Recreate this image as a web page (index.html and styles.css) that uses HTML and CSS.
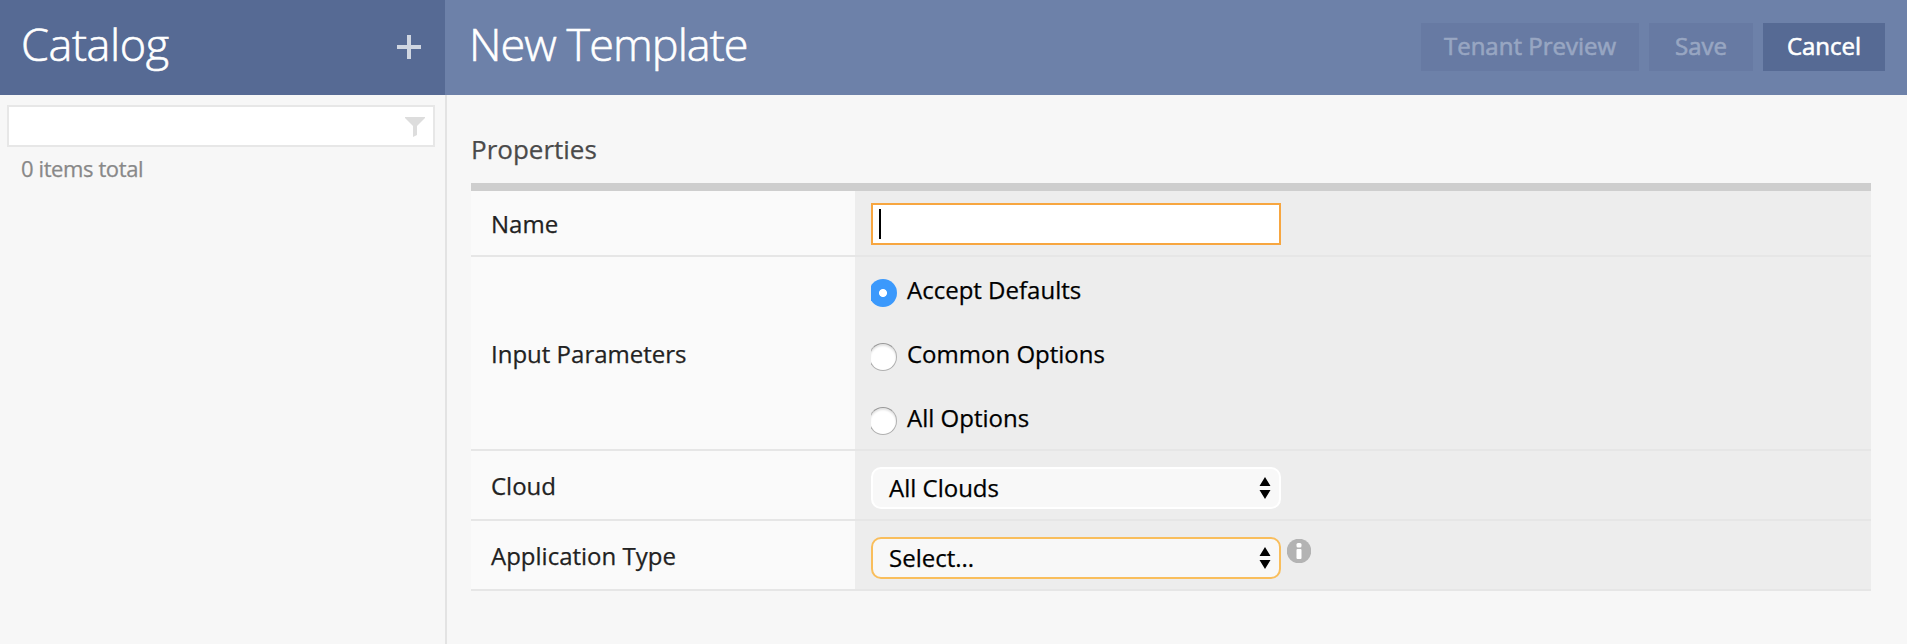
FILE: index.html
```html
<!DOCTYPE html>
<html lang="en">
<head>
<meta charset="utf-8">
<title>New Template</title>
<link rel="stylesheet" href="styles.css">
</head>
<body>
<div class="app">
  <aside class="sidebar">
    <header class="sidebar-header">
      <h1 class="title title-catalog">Catalog</h1>
      <svg class="add" viewBox="0 0 24 24" role="img" aria-label="Add"><path d="M0 10h10V0h4v10h10v4H14v10h-4V14H0z"/></svg>
    </header>
    <div class="filter">
      <svg class="funnel" viewBox="0 0 20 20" aria-hidden="true"><path d="M0 0h20v1l-8 8v9l-4 2V9L0 1z"/></svg>
    </div>
    <p class="count">0 items total</p>
  </aside>
  <main class="main">
    <header class="main-header">
      <h1 class="title title-template">New Template</h1>
      <div class="actions">
        <button class="btn btn-preview" disabled>Tenant Preview</button>
        <button class="btn btn-save" disabled>Save</button>
        <button class="btn btn-cancel">Cancel</button>
      </div>
    </header>
    <section class="content">
      <h2 class="section-title">Properties</h2>
      <div class="table">
        <div class="row row-name">
          <div class="label">Name</div>
          <div class="value"><div class="text-field"><span class="caret"></span></div></div>
        </div>
        <div class="row row-params">
          <div class="label">Input Parameters</div>
          <div class="value options">
            <div class="option"><span class="radio-clip"><span class="radio radio-on"></span></span><span>Accept Defaults</span></div>
            <div class="option"><span class="radio-clip"><span class="radio"></span></span><span>Common Options</span></div>
            <div class="option"><span class="radio-clip"><span class="radio"></span></span><span>All Options</span></div>
          </div>
        </div>
        <div class="row row-select">
          <div class="label">Cloud</div>
          <div class="value">
            <div class="select"><span>All Clouds</span><svg class="arrows" viewBox="0 0 12 22" aria-hidden="true"><path d="M6 0l5.5 9H.5zM.5 13h11L6 22z"/></svg></div>
          </div>
        </div>
        <div class="row row-select">
          <div class="label">Application Type</div>
          <div class="value">
            <div class="select select-required"><span>Select...</span><svg class="arrows" viewBox="0 0 12 22" aria-hidden="true"><path d="M6 0l5.5 9H.5zM.5 13h11L6 22z"/></svg></div>
            <svg class="info" viewBox="0 0 24 24" role="img" aria-label="Info"><circle cx="12" cy="12" r="12.3" fill="#b3b3b3"/><rect x="9.5" y="4" width="5" height="4.5" rx="1.5" fill="#fff"/><rect x="9.5" y="10" width="5" height="10" rx="1" fill="#fff"/></svg>
          </div>
        </div>
      </div>
    </section>
  </main>
</div>
</body>
</html>
```
FILE: styles.css
```css
* { box-sizing: border-box; }
body {
  margin: 0;
  background: #f7f7f7;
  font-family: "Open Sans", "Noto Sans", sans-serif;
  font-size: 24px;
  color: #000;
  -webkit-text-stroke-width: 0.25px;
}
.app { display: flex; height: 644px; overflow: hidden; }
.sidebar { width: 445px; flex: none; }
.sidebar-header {
  height: 95px;
  padding: 0 24px 0 21px;
  background: #566a94;
  display: flex;
  align-items: center;
  justify-content: space-between;
}
.title {
  margin: 0;
  padding-bottom: 7px;
  font-size: 45px;
  line-height: 60px;
  font-weight: 300;
  color: #fff;
  white-space: nowrap;
  -webkit-text-stroke-width: 0.6px;
}
.title-catalog { letter-spacing: -0.4px; }
.title-template { letter-spacing: -0.95px; }
.add { width: 24px; height: 24px; margin-bottom: 1px; fill: #d0d6e1; }
.filter {
  margin: 10px 10px 0 7px;
  height: 42px;
  padding: 0 8px;
  border: 2px solid #e7e7e7;
  background: #fff;
  display: flex;
  align-items: center;
  justify-content: flex-end;
}
.funnel { width: 20px; height: 20px; margin-top: 2px; fill: #ddd; }
.count { margin: 6px 0 0 21px; font-size: 22px; line-height: 30px; letter-spacing: -0.4px; color: #888; }
.main { flex: 1; display: flex; flex-direction: column; }
.main-header {
  height: 95px;
  flex: none;
  padding: 0 22px 0 24px;
  background: #6d81a9;
  display: flex;
  align-items: center;
  justify-content: space-between;
}
.actions { display: flex; gap: 10px; margin-bottom: 1px; }
.btn {
  height: 48px;
  padding: 0 0 3px;
  border: 0;
  font: 400 24px/45px "Open Sans", "Noto Sans", sans-serif;
  color: #fff;
  background: #566a94;
  -webkit-text-stroke-width: 0.6px;
}
.btn:disabled { color: #98a6c2; background: #677aa3; }
.btn-preview { width: 218px; }
.btn-save { width: 104px; }
.btn-cancel { width: 122px; }
.content { flex: 1; border-left: 2px solid #e3e3e3; padding: 36px 36px 0 24px; }
.section-title { margin: 0 0 16px; font-size: 26px; line-height: 36px; font-weight: 400; color: #4a4a4a; }
.table { border-top: 8px solid #cecece; }
.row { display: flex; border-bottom: 2px solid #e6e6e6; }
.row-name { height: 66px; }
.row-params { height: 194px; }
.row-select { height: 70px; }
.label { width: 384px; padding-left: 20px; background: #fafafa; color: #222; display: flex; align-items: center; }
.value { flex: 1; padding-left: 16px; background: #ededed; display: flex; align-items: flex-start; }
.text-field { width: 410px; height: 42px; margin-top: 12px; padding: 4px 6px; border: 2px solid #f7a640; background: #fff; }
.caret { display: block; width: 2px; height: 30px; background: #000; }
.options { flex-direction: column; }
.option { height: 64px; display: flex; align-items: center; gap: 10px; line-height: 32px; padding-top: 2px; }
.radio-clip { width: 26px; height: 28px; margin-top: 6px; overflow: hidden; display: flex; justify-content: flex-end; }
.radio {
  flex: none;
  width: 28px;
  height: 28px;
  border-radius: 50%;
  border: 1px solid #b0b0b0;
  border-top-color: #989898;
  background: #fff;
  box-shadow: inset 0 2px 2px #e4e4e4;
}
.radio-on {
  border: 0;
  background: radial-gradient(circle at 14px 14px, #fff 3.6px, #3b99fc 4.4px);
  box-shadow: none;
}
.select {
  width: 410px;
  height: 42px;
  margin-top: 16px;
  padding: 0 8px 0 16px;
  border: 2px solid #fff;
  border-radius: 10px;
  background: #f8f8f8;
  display: flex;
  align-items: center;
  justify-content: space-between;
  line-height: 38px;
}
.select-required { border-color: #f9be5c; }
.arrows { width: 12px; height: 22px; }
.info { width: 24px; height: 24px; margin: 18px 0 0 6px; }
```
